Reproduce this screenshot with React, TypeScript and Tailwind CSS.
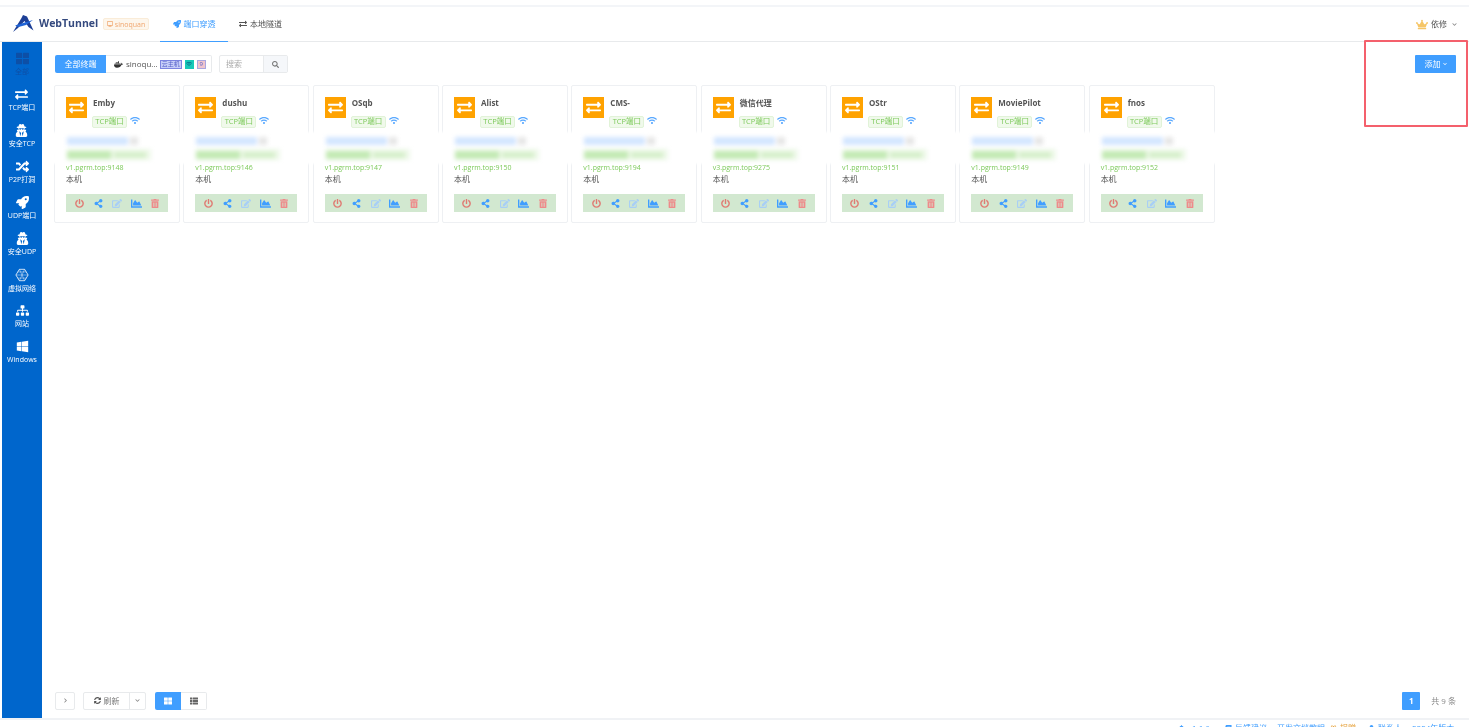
import React from 'react';
import {
  FaBell,
  FaBook,
  FaChartArea,
  FaChevronDown,
  FaChevronRight,
  FaCrown,
  FaDesktop,
  FaDocker,
  FaEdit,
  FaExchangeAlt,
  FaGift,
  FaPowerOff,
  FaRandom,
  FaRocket,
  FaSearch,
  FaShareAlt,
  FaSitemap,
  FaSyncAlt,
  FaThLarge,
  FaThList,
  FaTrashAlt,
  FaUser,
  FaUserSecret,
  FaWifi,
  FaWindows,
} from 'react-icons/fa';

const fontStack = { fontFamily: '"Open Sans", "Noto Sans CJK SC", sans-serif' };

const tunnels = [
  { name: 'Emby', host: 'v1.pgrm.top:9148' },
  { name: 'dushu', host: 'v1.pgrm.top:9146' },
  { name: 'OSqb', host: 'v1.pgrm.top:9147' },
  { name: 'Alist', host: 'v1.pgrm.top:9150' },
  { name: 'CMS-', host: 'v1.pgrm.top:9194' },
  { name: '微信代理', host: 'v3.pgrm.top:9275' },
  { name: 'OStr', host: 'v1.pgrm.top:9151' },
  { name: 'MoviePilot', host: 'v1.pgrm.top:9149' },
  { name: 'fnos', host: 'v1.pgrm.top:9152' },
];

function HexIcon() {
  return (
    <svg viewBox="0 0 16 16" className="w-[14px] h-[14px]" fill="none" stroke="currentColor" strokeWidth="0.9">
      <path d="M5 1.5h6L15 8l-4 6.5H5L1 8z" />
      <path d="M1 8h14M3 4.5h10M3 11.5h10M5 1.5l6 13M11 1.5l-6 13" strokeWidth="0.5" />
    </svg>
  );
}

function Logo() {
  return (
    <svg viewBox="0 0 21 18" className="w-[21px] h-[18px]">
      <path d="M0 17 L8.5 3 L10 0 L14 1.5 L20.5 15.5 L15.5 12 L11.5 6 L5 13 Z" fill="#1d3f96" />
      <path d="M2 10.5 L20 5 L13 10 L5.5 12 Z" fill="#1e63d6" />
    </svg>
  );
}

const navItems = [
  { label: '全部', icon: <FaThLarge className="w-[13px] h-[13px]" />, active: true },
  { label: 'TCP端口', icon: <FaExchangeAlt className="w-[13px] h-[13px]" /> },
  { label: '安全TCP', icon: <FaUserSecret className="w-[13px] h-[13px]" /> },
  { label: 'P2P打洞', icon: <FaRandom className="w-[13px] h-[13px]" /> },
  { label: 'UDP端口', icon: <FaRocket className="w-[13px] h-[13px]" /> },
  { label: '安全UDP', icon: <FaUserSecret className="w-[13px] h-[13px]" /> },
  { label: '虚拟网络', icon: <HexIcon /> },
  { label: '网站', icon: <FaSitemap className="w-[13px] h-[13px]" /> },
  { label: 'Windows', icon: <FaWindows className="w-[13px] h-[13px]" /> },
];

function TunnelCard({ name, host }: { name: string; host: string }) {
  return (
    <div className="relative w-[126px] h-[138px] shrink-0 bg-white border border-[#eef0f3] rounded-[2px] pt-[11px] px-[11px]">
      {/* the address lines are smudged out, the smudge eats the card border too */}
      <div className="absolute -left-[3px] -right-[3px] top-[46px] h-[32px] bg-white blur-[1px]" />
      <div className="relative flex gap-[5px]">
        <div className="w-[21px] h-[21px] bg-[#ffa200] flex items-center justify-center text-white">
          <FaExchangeAlt className="w-[15px] h-[15px]" />
        </div>
        <div className="flex flex-col">
          <div className="ml-[1px] h-[12px] leading-[12px] text-[8px] font-bold text-[#555]">{name}</div>
          <div className="flex items-center gap-[3px] mt-[7px]">
            <span className="h-[12px] w-[35px] flex items-center justify-center text-[7.5px] leading-none text-[#7cc95a] bg-[#f0f9eb] border border-[#e1f3d8] rounded-[2px]">
              TCP端口
            </span>
            <FaWifi className="w-[10px] h-[9px] text-[#5aa9ff] mb-[3px]" />
          </div>
        </div>
      </div>
      <div className="relative mt-[7px] ml-[1px] h-[11px] flex items-center gap-[2px] blur-[2px]">
        <span className="h-[8px] w-[61px] bg-[#d3e6ff]" />
        <span className="h-[8px] w-[8px] bg-[#e6e6e6]" />
      </div>
      <div className="relative mt-[3px] ml-[1px] h-[11px] w-[84px] flex items-center bg-[#eef8e9] blur-[2px]">
        <span className="h-[8px] w-[44px] bg-[#c3eab4]" />
        <span className="ml-[3px] h-[6px] w-[32px] bg-[#d6f0cb]" />
      </div>
      <div className="relative mt-[3px] h-[10px] leading-[10px] text-[7px] text-[#7cc95a]">{host}</div>
      <div className="relative h-[12px] leading-[12px] text-[8px] text-[#555]">本机</div>
      <div className="relative mt-[9px] w-[102px] h-[18px] bg-[#d2e8d0] flex items-center justify-center gap-[8px] text-[#409eff]">
        <span className="w-[11px] flex justify-center"><FaPowerOff className="w-[9px] h-[9px] text-[#e07a72]" /></span>
        <span className="w-[11px] flex justify-center"><FaShareAlt className="w-[9px] h-[9px]" /></span>
        <span className="w-[11px] flex justify-center"><FaEdit className="w-[10px] h-[9px] text-[#a8cff5]" /></span>
        <span className="w-[11px] flex justify-center"><FaChartArea className="w-[11px] h-[11px]" /></span>
        <span className="w-[11px] flex justify-center"><FaTrashAlt className="w-[8px] h-[9px] text-[#ee8a8a]" /></span>
      </div>
    </div>
  );
}

export default function App() {
  return (
    <div className="h-[727px] w-[1469px] overflow-hidden bg-white flex flex-col relative blur-[0.35px]" style={fontStack}>
      <div className="h-[5px] shrink-0" />
      <div className="h-[2px] shrink-0 bg-[#f3f5f8]" />

      {/* header */}
      <header className="h-[35px] shrink-0 flex items-center border-b border-[#e8eaec] pl-[13px] pr-[12px]">
        <Logo />
        <span className="ml-[5px] w-[59px] text-[10.5px] font-bold text-[#34497e] whitespace-nowrap">WebTunnel</span>
        <span className="ml-[5px] h-[12px] w-[46px] flex items-center justify-center gap-[2px] text-[7px] leading-none text-[#f0a66e] bg-[#fdf6ec] border border-[#faecd8] rounded-[2px]">
          <FaDesktop className="w-[6px] h-[6px]" />
          sinoquan
        </span>
        <div className="ml-[11px] h-[35px] w-[68px] flex items-center justify-center gap-[3px] text-[8px] text-[#409eff] border-b-[1px] border-[#409eff]">
          <FaRocket className="w-[8px] h-[8px]" />
          端口穿透
        </div>
        <div className="ml-[11px] flex items-center gap-[3px] text-[8px] text-[#555]">
          <FaExchangeAlt className="w-[8px] h-[8px]" />
          本地隧道
        </div>
        <div className="ml-auto flex items-center gap-[3px] text-[8px] text-[#555]">
          <FaCrown className="w-[12px] h-[11px] text-[#f6c667]" />
          依修
          <FaChevronDown className="ml-[2px] w-[5px] h-[5px] text-[#888]" />
        </div>
      </header>

      <div className="flex-1 min-h-0 flex pl-[2px]">
        {/* sidebar */}
        <aside className="w-[40px] shrink-0 bg-[#0066cc] flex flex-col items-center pt-[10px] gap-[9px]">
          {navItems.map((item) => (
            <div
              key={item.label}
              className={`h-[27px] flex flex-col items-center justify-start gap-[2px] text-[7px] leading-[9px] whitespace-nowrap ${
                item.active ? 'text-[#0d4fa6]' : 'text-white'
              }`}
            >
              {item.icon}
              <span>{item.label}</span>
            </div>
          ))}
        </aside>

        {/* content */}
        <main className="flex-1 min-w-0 flex flex-col pl-[13px] pr-[13px]">
          <div className="h-[43px] pt-[1px] shrink-0 flex items-center justify-between">
            <div className="flex items-center">
              <div className="h-[18px] w-[51px] flex items-center justify-center bg-[#409eff] text-white text-[8px] rounded-l-[2px]">
                全部终端
              </div>
              <div className="h-[18px] w-[106px] flex items-center gap-[2px] pl-[8px] border border-l-0 border-[#e8eaec] text-[8px] text-[#555] rounded-r-[2px]">
                <FaDocker className="w-[9px] h-[9px] text-[#333]" />
                <span className="ml-[1px]">sinoqu...</span>
                <span className="h-[9px] w-[22px] flex items-center justify-center bg-[#c6cdf8] border border-[#7c84e0] text-[#5560c8] text-[6px] leading-none">
                  云主机
                </span>
                <span className="ml-[1px] h-[9px] w-[9px] flex items-center justify-center bg-[#16c9b8] text-[#0a6a8a]">
                  <FaWifi className="w-[6px] h-[6px]" />
                </span>
                <span className="ml-[1px] h-[9px] w-[9px] flex items-center justify-center bg-[#efc4cc] border border-[#a9a6e0] text-[#5560c8] text-[6px] leading-none">
                  9
                </span>
              </div>
              <div className="ml-[7px] h-[18px] w-[69px] flex border border-[#e8eaec] rounded-[2px]">
                <div className="w-[43px] flex items-center pl-[6px] text-[8px] text-[#aaa]">搜索</div>
                <div className="flex-1 bg-[#f5f7fa] border-l border-[#e8eaec] flex items-center justify-center text-[#777]">
                  <FaSearch className="w-[7px] h-[7px]" />
                </div>
              </div>
            </div>
            <div className="h-[18px] w-[41px] flex items-center justify-center gap-[2px] bg-[#409eff] text-white text-[8px] rounded-[1px]">
              添加
              <FaChevronDown className="w-[4px] h-[4px]" />
            </div>
          </div>

          {/* cards */}
          <div className="flex gap-[3.33px] -ml-[1px]">
            {tunnels.map((t) => (
              <TunnelCard key={t.name} name={t.name} host={t.host} />
            ))}
          </div>

          {/* bottom toolbar */}
          <div className="mt-auto h-[33px] shrink-0 flex items-center justify-between pb-[2px]">
            <div className="flex items-center">
              <div className="h-[18px] w-[20px] flex items-center justify-center border border-[#e8eaec] rounded-[2px] text-[#888]">
                <FaChevronRight className="w-[5px] h-[5px]" />
              </div>
              <div className="ml-[8px] h-[18px] w-[63px] flex border border-[#e8eaec] rounded-[2px]">
                <div className="w-[45px] flex items-center justify-center gap-[3px] text-[8px] text-[#777]">
                  <FaSyncAlt className="w-[7px] h-[7px] text-[#555]" />
                  刷新
                </div>
                <div className="flex-1 border-l border-[#e8eaec] flex items-center justify-center text-[#888]">
                  <FaChevronDown className="w-[5px] h-[5px]" />
                </div>
              </div>
              <div className="ml-[9px] h-[18px] w-[26px] flex items-center justify-center bg-[#409eff] text-white rounded-l-[2px]">
                <FaThLarge className="w-[8px] h-[8px]" />
              </div>
              <div className="h-[18px] w-[26px] flex items-center justify-center border border-l-0 border-[#e8eaec] rounded-r-[2px] text-[#666]">
                <FaThList className="w-[8px] h-[8px]" />
              </div>
            </div>
            <div className="flex items-center">
              <div className="h-[18px] w-[18px] flex items-center justify-center bg-[#409eff] text-white text-[8px] font-bold rounded-[1px]">
                1
              </div>
              <span className="ml-[11px] text-[8px] text-[#888]">共 9 条</span>
            </div>
          </div>
        </main>
      </div>

      {/* footer, cut off by the bottom of the window */}
      <footer className="h-[9px] shrink-0 border-t-2 border-[#f0f2f5] flex items-start pl-[1178px] pt-[3px] text-[8px] leading-[10px] text-[#409eff]">
        <span className="w-[47px] flex items-center gap-[7px] whitespace-nowrap"><FaBell className="w-[7px] h-[7px]" />1.1.6</span>
        <span className="w-[52px] flex items-center gap-[3px] whitespace-nowrap"><FaBook className="w-[7px] h-[7px]" />反馈建议</span>
        <span className="w-[53px] whitespace-nowrap">开发文档教程</span>
        <span className="w-[38px] flex items-center gap-[3px] whitespace-nowrap text-[#e6a23c]"><FaGift className="w-[7px] h-[7px]" />捐赠</span>
        <span className="w-[44px] flex items-center gap-[3px] whitespace-nowrap"><FaUser className="w-[7px] h-[7px]" />联系人</span>
        <span className="whitespace-nowrap">2024年版本</span>
      </footer>

      {/* annotation drawn over the screenshot */}
      <div className="absolute left-[1364px] top-[40px] w-[104px] h-[87px] border-2 border-[#f4606c] rounded-[1px] pointer-events-none" />
    </div>
  );
}
